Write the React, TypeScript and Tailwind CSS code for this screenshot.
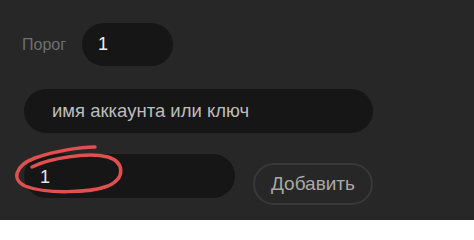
export default function App() {
  return (
    <div className="relative h-[220px] w-[474px] overflow-hidden bg-[#272727] font-['Liberation_Sans',Arial,sans-serif]">
      <div className="flex flex-col pl-6 pt-[23px]">
        {/* threshold */}
        <div className="flex items-center">
          <span className="-ml-[2px] w-[60px] text-[16px] text-[#6f6f6f]">Порог</span>
          <div className="flex h-[43px] w-[91px] items-center rounded-full bg-[#161616] pl-4 text-[18px] text-[#eeeeee]">
            1
          </div>
        </div>

        {/* account */}
        <div className="mt-[23px] flex h-[44px] w-[349px] items-center rounded-full bg-[#161616] pl-7 text-[18.5px] text-[#bdbdbd]">
          имя аккаунта или ключ
        </div>

        {/* weight + add */}
        <div className="mt-[21px] flex items-start">
          <div className="flex h-[44px] w-[211px] items-center rounded-full bg-[#161616] pl-4 pt-[2px] text-[18px] text-[#e6e6e6]">
            1
          </div>
          <button className="ml-[18px] mt-[9px] flex h-[42px] w-[120px] items-center justify-center rounded-full border-2 border-[#383838] text-[19px] text-[#a8a8a8]">
            Добавить
          </button>
        </div>
      </div>

      {/* red marker scribble */}
      <svg className="pointer-events-none absolute left-0 top-0" width="474" height="220" viewBox="0 0 474 220">
        <path
          d="M32 167 C50 158 88 152 108 157 C124 162 126 178 108 186 C90 193 45 194 25 186 C12 180 14 166 35 158 C55 151 80 147 95 147"
          fill="none"
          stroke="#e0504f"
          strokeWidth="3.5"
          strokeLinecap="round"
        />
      </svg>
    </div>
  )
}
